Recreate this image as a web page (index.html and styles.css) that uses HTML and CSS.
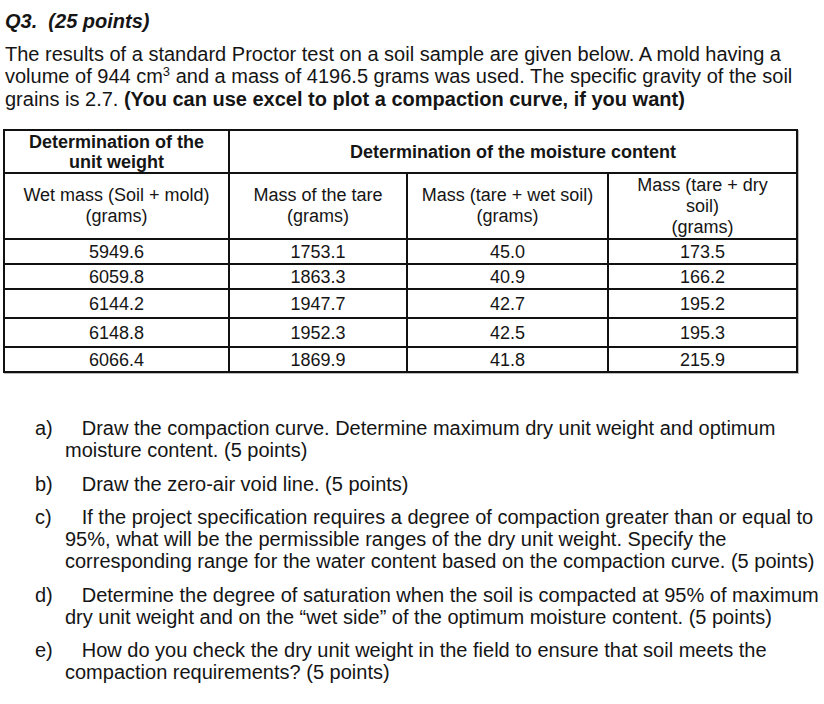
FILE: index.html
```html
<!DOCTYPE html>
<html lang="en">
<head>
<meta charset="utf-8">
<title>Q3 Proctor test</title>
<link rel="stylesheet" href="styles.css">
</head>
<body>
<div class="page">
  <h1 class="title">Q3.&nbsp; (25 points)</h1>
  <p class="intro">The results of a standard Proctor test on a soil sample are given below. A mold having a<br>volume of 944 cm<sup>3</sup> and a mass of 4196.5 grams was used. The specific gravity of the soil<br>grains is 2.7. <strong>(You can use excel to plot a compaction curve, if you want)</strong></p>

  <table class="data">
    <colgroup>
      <col class="c1"><col class="c2"><col class="c3"><col class="c4">
    </colgroup>
    <thead>
      <tr class="r-h1">
        <th>Determination of the<br>unit weight</th>
        <th colspan="3">Determination of the moisture content</th>
      </tr>
      <tr class="r-h2">
        <td>Wet mass (Soil + mold)<br>(grams)</td>
        <td>Mass of the tare<br>(grams)</td>
        <td>Mass (tare + wet soil)<br>(grams)</td>
        <td>Mass (tare + dry<br>soil)<br>(grams)</td>
      </tr>
    </thead>
    <tbody>
      <tr class="r-a"><td>5949.6</td><td>1753.1</td><td>45.0</td><td>173.5</td></tr>
      <tr class="r-b"><td>6059.8</td><td>1863.3</td><td>40.9</td><td>166.2</td></tr>
      <tr class="r-c"><td>6144.2</td><td>1947.7</td><td>42.7</td><td>195.2</td></tr>
      <tr class="r-c"><td>6148.8</td><td>1952.3</td><td>42.5</td><td>195.3</td></tr>
      <tr class="r-b"><td>6066.4</td><td>1869.9</td><td>41.8</td><td>215.9</td></tr>
    </tbody>
  </table>

  <div class="items">
    <p class="item"><span class="mark">a)</span>Draw the compaction curve. Determine maximum dry unit weight and optimum<br>moisture content. (5 points)</p>
    <p class="item"><span class="mark">b)</span>Draw the zero-air void line. (5 points)</p>
    <p class="item"><span class="mark">c)</span>If the project specification requires a degree of compaction greater than or equal to<br>95%, what will be the permissible ranges of the dry unit weight. Specify the<br>corresponding range for the water content based on the compaction curve. (5 points)</p>
    <p class="item"><span class="mark">d)</span>Determine the degree of saturation when the soil is compacted at 95% of maximum<br>dry unit weight and on the “wet side” of the optimum moisture content. (5 points)</p>
    <p class="item"><span class="mark">e)</span>How do you check the dry unit weight in the field to ensure that soil meets the<br>compaction requirements? (5 points)</p>
  </div>
</div>
</body>
</html>
```

FILE: styles.css
```css
html, body {
  margin: 0;
  padding: 0;
  background: #ffffff;
}

body {
  font-family: "Liberation Sans", Arial, sans-serif;
  color: #151515;
}

.page {
  padding: 10px 0 0 5px;
}

.title {
  margin: 0;
  font-size: 20px;
  line-height: 22.5px;
  font-weight: bold;
  font-style: italic;
}

.intro {
  margin: 10.3px 0 0 0;
  font-size: 20px;
  line-height: 22.5px;
  white-space: nowrap;
}

.intro sup {
  font-size: 13px;
  line-height: 0;
  vertical-align: 7px;
}

.data {
  margin: 19px 0 0 -2px;
  width: 795px;
  table-layout: fixed;
  border-collapse: collapse;
  border: 2px solid #111;
  font-size: 18px;
  box-shadow: 1px 1px 0 #bbb;
}

.c1 { width: 225px; }
.c2 { width: 178px; }
.c3 { width: 201px; }
.c4 { width: 189px; }

.data th,
.data td {
  border: 2px solid #111;
  padding: 0;
  text-align: center;
  vertical-align: middle;
  white-space: nowrap;
  overflow: visible;
}

.data th {
  font-weight: bold;
  line-height: 20px;
}

.r-h1 { height: 43px; }
.r-h2 { height: 65.5px; }
.r-h2 td { line-height: 21px; }
.r-a { height: 25.5px; }
.r-b { height: 25px; }
.r-c { height: 29px; }

.data tbody td {
  line-height: 20px;
  padding-top: 1px;
}

.items {
  margin: 44px 0 0 60px;
}

.item {
  margin: 0 0 11.5px 0;
  font-size: 20px;
  line-height: 22px;
  text-indent: -30px;
  white-space: nowrap;
}

.mark {
  display: inline-block;
  width: 46.7px;
  text-indent: 0;
}
```
